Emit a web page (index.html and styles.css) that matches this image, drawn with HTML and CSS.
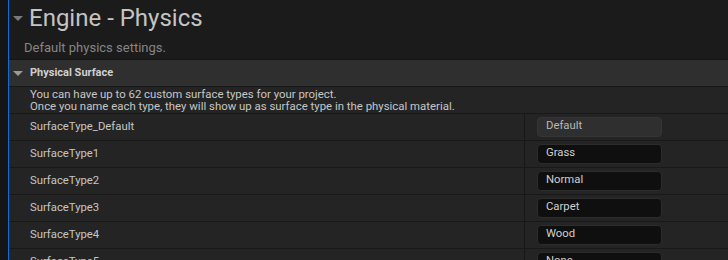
FILE: index.html
```html
<!DOCTYPE html>
<html>
<head>
<meta charset="utf-8">
<link rel="stylesheet" href="styles.css">
</head>
<body>
<div class="panel">
  <div class="title-row">
    <span class="tri tri-title"></span>
    <h1 class="title">Engine - Physics</h1>
  </div>
  <div class="subtitle">Default physics settings.</div>
  <div class="section-head">
    <span class="tri tri-head"></span>
    <span class="section-name">Physical Surface</span>
  </div>
  <div class="desc">
    <div class="desc-line">You can have up to 62 custom surface types for your project.</div>
    <div class="desc-line">Once you name each type, they will show up as surface type in the physical material.</div>
  </div>
  <div class="row">
    <div class="name">SurfaceType_Default</div>
    <div class="value"><div class="field field-disabled">Default</div></div>
  </div>
  <div class="row">
    <div class="name">SurfaceType1</div>
    <div class="value"><div class="field">Grass</div></div>
  </div>
  <div class="row">
    <div class="name">SurfaceType2</div>
    <div class="value"><div class="field">Normal</div></div>
  </div>
  <div class="row">
    <div class="name">SurfaceType3</div>
    <div class="value"><div class="field">Carpet</div></div>
  </div>
  <div class="row">
    <div class="name">SurfaceType4</div>
    <div class="value"><div class="field">Wood</div></div>
  </div>
  <div class="row">
    <div class="name">SurfaceType5</div>
    <div class="value"><div class="field">None</div></div>
  </div>
</div>
</body>
</html>
```
FILE: styles.css
```css
html, body {
  margin: 0;
  padding: 0;
  background: #151515;
  font-family: Roboto, "Liberation Sans", sans-serif;
  overflow: hidden;
}
.panel {
  margin-left: 8px;
  border-left: 1px solid #0b6fd6;
  background: #1b1b1b;
  height: 260px;
  overflow: hidden;
}
.title-row {
  display: flex;
  align-items: center;
  height: 36px;
  padding-left: 4px;
}
.tri {
  width: 0;
  height: 0;
  border-left: 5px solid transparent;
  border-right: 5px solid transparent;
  border-top: 5px solid #7a7a7a;
}
.title {
  margin: 0 0 0 6px;
  font-size: 24px;
  font-weight: 400;
  color: #c4c4c4;
  line-height: 36px;
}
.subtitle {
  height: 23px;
  line-height: 23px;
  padding-left: 15px;
  font-size: 13px;
  color: #858585;
}
.section-head {
  display: flex;
  align-items: center;
  height: 26px;
  border-top: 1px solid #151515;
  background: #2f2f2f;
  padding-left: 4px;
}
.tri-head {
  border-top-color: #9a9a9a;
}
.section-name {
  margin-left: 7px;
  margin-bottom: 1px;
  font-size: 11px;
  font-weight: 700;
  color: #d0d0d0;
}
.desc {
  background: #242424;
  border-top: 1px solid #181818;
  padding: 1px 0 0 21px;
  height: 25px;
  font-size: 11.4px;
  color: #c6c6c6;
}
.desc-line {
  line-height: 12px;
  height: 12px;
  white-space: nowrap;
}
.row {
  display: flex;
  height: 26px;
  border-top: 1px solid #181818;
  background: #242424;
}
.name {
  width: 494px;
  padding-left: 21px;
  font-size: 11.3px;
  line-height: 26px;
  color: #c6c6c6;
  border-right: 1px solid #181818;
}
.value {
  flex: 1;
  display: flex;
  align-items: center;
  padding-left: 12px;
}
.field {
  box-sizing: border-box;
  width: 125px;
  height: 20px;
  border-radius: 4px;
  border: 1px solid #2c2c2c;
  background: #0f0f0f;
  color: #d0d0d0;
  font-size: 11.3px;
  line-height: 16px;
  padding-left: 8px;
}
.field-disabled {
  background: #2f2f2f;
  border-color: #353535;
  color: #b8b8b8;
}
```
